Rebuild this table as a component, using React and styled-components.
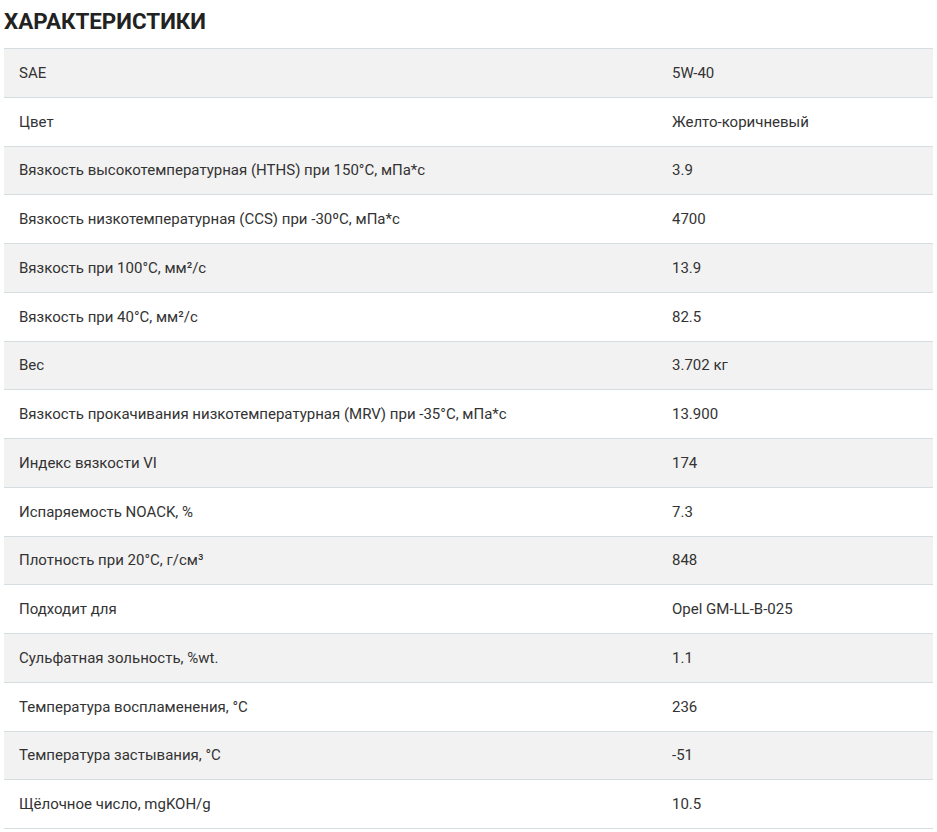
import React from "react";
import styled, { createGlobalStyle } from "styled-components";

const specs = [
  ["SAE", "5W-40"],
  ["Цвет", "Желто-коричневый"],
  ["Вязкость высокотемпературная (HTHS) при 150°C, мПа*с", "3.9"],
  ["Вязкость низкотемпературная (CCS) при -30ºC, мПа*с", "4700"],
  ["Вязкость при 100°C, мм²/с", "13.9"],
  ["Вязкость при 40°C, мм²/с", "82.5"],
  ["Вес", "3.702 кг"],
  ["Вязкость прокачивания низкотемпературная (MRV) при -35°C, мПа*с", "13.900"],
  ["Индекс вязкости VI", "174"],
  ["Испаряемость NOACK, %", "7.3"],
  ["Плотность при 20°C, г/см³", "848"],
  ["Подходит для", "Opel GM-LL-B-025"],
  ["Сульфатная зольность, %wt.", "1.1"],
  ["Температура воспламенения, °C", "236"],
  ["Температура застывания, °C", "-51"],
  ["Щёлочное число, mgKOH/g", "10.5"],
];

function App() {
  return (
    <>
      <GlobalStyle />
      <Page>
        <Title>Характеристики</Title>
        <Table>
          {specs.map(([name, value], i) => (
            <Row key={name} $striped={i % 2 === 0}>
              <Cell>{name}</Cell>
              <Cell>{value}</Cell>
            </Row>
          ))}
        </Table>
      </Page>
    </>
  );
}

export default App;

const GlobalStyle = createGlobalStyle`
  body {
    margin: 0;
    background: #fff;
    font-family: Roboto, "Noto Sans", sans-serif;
  }
`;
const Page = styled.div`
  padding: 6px 4px 0 4px;
  width: 929px;
`;
const Title = styled.h2`
  margin: 0 0 11px 0;
  font-size: 22.4px;
  line-height: 31px;
  font-weight: 700;
  text-transform: uppercase;
  color: #222;
`;
const Table = styled.div`
  border-top: 1px solid #d6dde0;
`;
const Row = styled.div`
  display: grid;
  grid-template-columns: 653px 1fr;
  height: 47.75px;
  align-items: center;
  border-bottom: 1px solid #d6dde0;
  background: ${(p) => (p.$striped ? "#f2f2f2" : "#fff")};
`;
const Cell = styled.div`
  padding: 0 15px;
  font-size: 15px;
  color: #333;
`;
